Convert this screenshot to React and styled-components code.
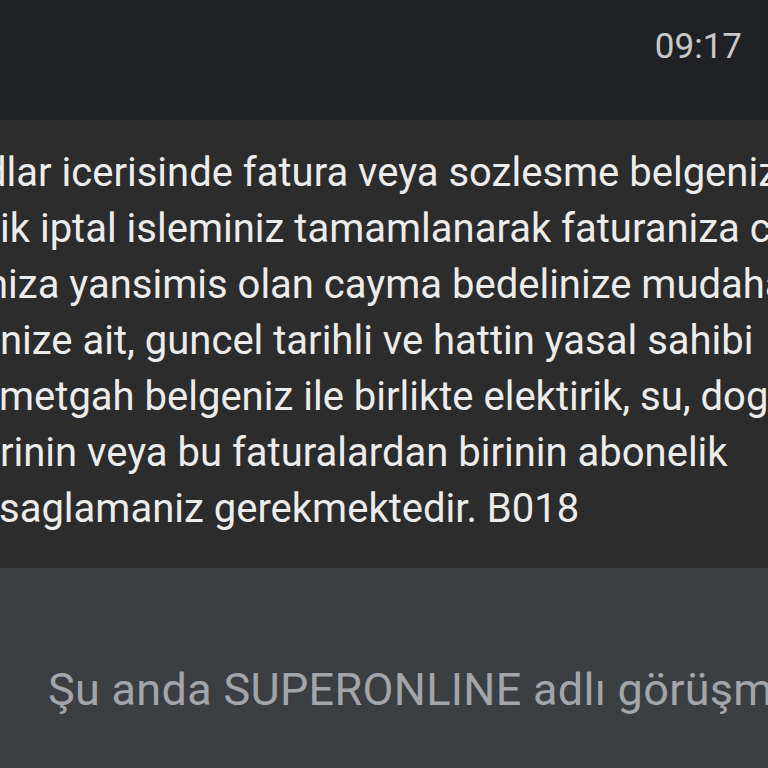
import React from "react";
import styled, { createGlobalStyle } from "styled-components";

const GlobalStyle = createGlobalStyle`
  html, body {
    margin: 0;
    padding: 0;
    background: #202124;
  }
  body {
    font-family: Roboto, "Noto Sans", "Liberation Sans", sans-serif;
  }
`;

const lines = [
  { text: "dlar icerisinde fatura veya sozlesme belgenizi", indent: -16 },
  { text: "ik iptal isleminiz tamamlanarak faturaniza cayma", indent: 0 },
  { text: "niza yansimis olan cayma bedelinize mudahale", indent: -14 },
  { text: "nize ait, guncel tarihli ve hattin yasal sahibi", indent: 0 },
  { text: "metgah belgeniz ile birlikte elektirik, su, dogalgaz", indent: -1 },
  { text: "rinin veya bu faturalardan birinin abonelik", indent: 0 },
  { text: "saglamaniz gerekmektedir. B018", indent: -1 },
];

function App() {
  return (
    <>
      <GlobalStyle />
      <Screen>
        <Header>
          <Time>09:17</Time>
        </Header>
        <Bubble>
          {lines.map((l, i) => (
            <Line key={i} $indent={l.indent}>
              {l.text}
            </Line>
          ))}
        </Bubble>
        <Footer>
          <Notice>Şu anda SUPERONLINE adlı görüşmeye yanıt veremezsiniz</Notice>
        </Footer>
      </Screen>
    </>
  );
}

const Screen = styled.div`
  width: 768px;
  height: 768px;
  display: flex;
  flex-direction: column;
  overflow: hidden;
`;

const Header = styled.div`
  height: 120px;
  box-sizing: border-box;
  background: #202124;
  display: flex;
  justify-content: flex-end;
  align-items: flex-start;
  padding: 29px 26px 0 0;
`;

const Time = styled.span`
  font-size: 35px;
  line-height: 1;
  color: #c9c9cb;
`;

const Bubble = styled.div`
  background: #2c2c2c;
  padding: 25px 0 31px;
  overflow: hidden;
  color: #ececec;
  font-size: 40px;
  line-height: 56px;
`;

const Line = styled.div`
  white-space: nowrap;
  text-indent: ${(p) => p.$indent}px;
`;

const Footer = styled.div`
  flex: 1;
  background: #3c3f42;
  padding: 99px 0 0 48px;
  overflow: hidden;
`;

const Notice = styled.div`
  font-size: 45px;
  line-height: 1;
  letter-spacing: 0.3px;
  color: #a2a6aa;
  white-space: nowrap;
`;

export default App;
